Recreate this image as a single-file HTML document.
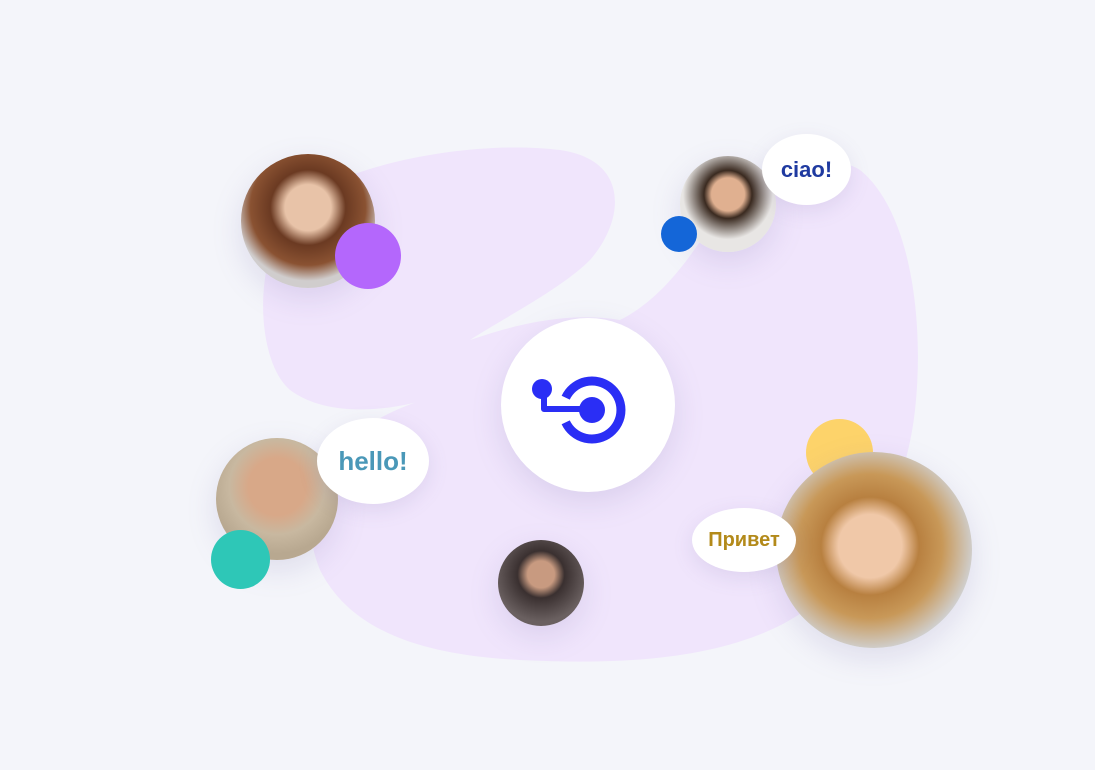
<!DOCTYPE html>
<html><head><style>
html,body{margin:0;padding:0}
body{width:1095px;height:770px;background:#f4f5fa;position:relative;overflow:hidden;font-family:"Liberation Sans",sans-serif}
.a{position:absolute;border-radius:50%}
.sh{box-shadow:0 10px 30px rgba(120,110,170,.18)}
.b{position:absolute;background:#fff;border-radius:50%;display:flex;align-items:center;justify-content:center;font-weight:bold;box-shadow:0 6px 20px rgba(120,110,170,.15)}
</style></head><body>
<svg width="1095" height="770" style="position:absolute;left:0;top:0">
<path fill="#f0e5fc" d="M300 200 C360 160 480 140 560 150 C630 160 625 220 590 260 C560 290 500 320 470 340 C500 330 560 310 620 320 C660 300 690 260 720 210 C760 170 830 150 860 170 C910 210 925 320 915 410 C905 500 860 580 790 620 C720 660 620 665 520 660 C420 655 350 630 320 570 C300 520 310 470 360 430 C390 410 420 400 440 395 C400 410 330 420 290 390 C255 360 250 250 300 200 Z"/>
</svg>
<div class="a sh" style="left:241px;top:154px;width:134px;height:134px;background:radial-gradient(circle at 50% 40%,#e8c3a8 0 22%,#6b3a22 36%,#8a5232 55%,#d0cdcd 70%)"></div>
<div class="a" style="left:335px;top:223px;width:66px;height:66px;background:#b467fc"></div>
<div class="a sh" style="left:680px;top:156px;width:96px;height:96px;background:radial-gradient(circle at 50% 40%,#e0b090 0 22%,#3a2a20 32%,#e8e6e4 60%)"></div>
<div class="a" style="left:661px;top:216px;width:36px;height:36px;background:#1466d8"></div>
<div class="b" style="left:762px;top:134px;width:89px;height:71px;color:#1f3aa0;font-size:22px">ciao!</div>
<div class="a sh" style="left:501px;top:318px;width:174px;height:174px;background:#fff"></div>
<svg width="1095" height="770" style="position:absolute;left:0;top:0">
<path d="M565.7 397.7 A29 29 0 1 1 565.7 422.3" fill="none" stroke="#2a2ef5" stroke-width="9"/>
<circle cx="592" cy="410" r="13" fill="#2a2ef5"/>
<circle cx="542" cy="389" r="10" fill="#2a2ef5"/>
<path d="M544 392 V409 H590" fill="none" stroke="#2a2ef5" stroke-width="6" stroke-linejoin="round"/>
</svg>
<div class="a sh" style="left:216px;top:438px;width:122px;height:122px;background:radial-gradient(circle at 50% 40%,#d8a888 0 30%,#c8b8a0 50%,#b8a890 70%)"></div>
<div class="a" style="left:211px;top:530px;width:59px;height:59px;background:#2ec7b7"></div>
<div class="b" style="left:317px;top:418px;width:112px;height:86px;color:#4a98b8;font-size:26px">hello!</div>
<div class="a sh" style="left:498px;top:540px;width:86px;height:86px;background:radial-gradient(circle at 50% 40%,#c89a80 0 20%,#3a3030 35%,#6a6060 70%)"></div>
<div class="a" style="left:806px;top:419px;width:67px;height:67px;background:#fdd36a"></div>
<div class="a sh" style="left:776px;top:452px;width:196px;height:196px;background:radial-gradient(circle at 48% 48%,#f0c8a8 0 22%,#b88040 34%,#c89858 50%,#d0d0d0 72%)"></div>
<div class="b" style="left:692px;top:508px;width:104px;height:64px;color:#b38a1a;font-size:20px">Привет</div>
</body></html>
